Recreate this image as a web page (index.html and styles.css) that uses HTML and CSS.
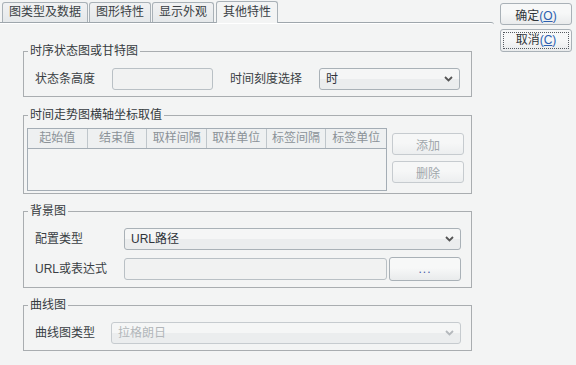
FILE: index.html
```html
<!DOCTYPE html>
<html lang="zh">
<head>
    <meta charset="UTF-8">
    <title>其他特性</title>
    <link rel="stylesheet" href="styles.css">
</head>
<body>
    <div class="window">
        <div class="main">
            <!-- Tabs -->
            <div class="tabs">
                <div class="tab">图类型及数据</div>
                <div class="tab">图形特性</div>
                <div class="tab">显示外观</div>
                <div class="tab selected">其他特性</div>
            </div>

            <div class="panel">
                <!-- Gantt -->
                <fieldset class="group group-gantt">
                    <legend>时序状态图或甘特图</legend>
                    <div class="row">
                        <span class="label label-bar">状态条高度</span>
                        <div class="input input-bar"></div>
                        <span class="label label-scale">时间刻度选择</span>
                        <div class="select select-scale">
                            <span>时</span>
                            <svg class="arrow" width="9" height="6" viewBox="0 0 9 6"><path d="M1 1 L4.5 4.5 L8 1" fill="none" stroke="#555" stroke-width="1.8"/></svg>
                        </div>
                    </div>
                </fieldset>

                <!-- Trend axis -->
                <fieldset class="group group-axis">
                    <legend>时间走势图横轴坐标取值</legend>
                    <div class="row row-top">
                        <div class="grid-table">
                            <div class="grid-head">
                                <div class="th">起始值</div>
                                <div class="th">结束值</div>
                                <div class="th">取样间隔</div>
                                <div class="th">取样单位</div>
                                <div class="th">标签间隔</div>
                                <div class="th">标签单位</div>
                            </div>
                        </div>
                        <div class="side-buttons">
                            <button class="btn disabled">添加</button>
                            <button class="btn disabled">删除</button>
                        </div>
                    </div>
                </fieldset>

                <!-- Background -->
                <fieldset class="group group-bg">
                    <legend>背景图</legend>
                    <div class="row">
                        <span class="label label-bg">配置类型</span>
                        <div class="select select-type">
                            <span>URL路径</span>
                            <svg class="arrow" width="9" height="6" viewBox="0 0 9 6"><path d="M1 1 L4.5 4.5 L8 1" fill="none" stroke="#555" stroke-width="1.8"/></svg>
                        </div>
                    </div>
                    <div class="row row-url">
                        <span class="label label-bg">URL或表达式</span>
                        <div class="input input-url"></div>
                        <button class="btn btn-browse">...</button>
                    </div>
                </fieldset>

                <!-- Curve -->
                <fieldset class="group group-curve">
                    <legend>曲线图</legend>
                    <div class="row">
                        <span class="label label-curve">曲线图类型</span>
                        <div class="select select-curve disabled">
                            <span>拉格朗日</span>
                            <svg class="arrow" width="9" height="6" viewBox="0 0 9 6"><path d="M1 1 L4.5 4.5 L8 1" fill="none" stroke="#b4b8bc" stroke-width="1.8"/></svg>
                        </div>
                    </div>
                </fieldset>
            </div>
        </div>

        <!-- Dialog buttons -->
        <div class="actions">
            <button class="btn btn-dialog">确定<span class="mn">(<u>O</u>)</span></button>
            <button class="btn btn-dialog focused"><span class="focus-ring">取消<span class="mn">(<u>C</u>)</span></span></button>
        </div>
    </div>
</body>
</html>
```

FILE: styles.css
```css
* {
    margin: 0;
    padding: 0;
    box-sizing: border-box;
}

body {
    font-family: 'Liberation Sans', 'Noto Sans CJK SC', sans-serif;
    font-size: 12px;
    line-height: 14px;
    color: #3a3f44;
    background-color: #f3f4f4;
    width: 576px;
    height: 365px;
    overflow: hidden;
}

.window {
    display: flex;
    height: 365px;
}

.main {
    width: 494px;
    display: flex;
    flex-direction: column;
}

/* Tabs */
.tabs {
    display: flex;
    align-items: flex-end;
    height: 22px;
    padding-left: 2px;
    gap: 1px;
}

.tab {
    height: 20px;
    padding: 0 6px;
    line-height: 18px;
    border: 1px solid #a9b1b7;
    border-bottom: none;
    border-radius: 3px 3px 0 0;
    background: linear-gradient(#f1f2f3, #e5e8ea);
    color: #3a3f44;
    font-size: 12px;
}

.tab.selected {
    height: 22px;
    line-height: 20px;
    margin-left: 1px;
    margin-bottom: -1px;
    background: #f3f4f4;
    position: relative;
    z-index: 1;
}

.panel {
    flex: 1;
    border-top: 1px solid #9ea6ac;
    border-top-right-radius: 3px;
    box-shadow: inset 0 1px #ffffff;
    padding-left: 23px;
}

/* Group boxes */
.group {
    width: 449px;
    border: 1px solid #a9adb0;
    padding: 10px 10px 6px 11px;
    margin-top: 10px;
}

.group legend {
    padding: 0 2px;
    margin-left: -7px;
    line-height: 14px;
    color: #363b40;
}

.group-gantt {
    margin-top: 21px;
    padding-bottom: 6px;
}

.group-axis {
    margin-top: 11px;
    padding: 6px 3px 2px 3px;
}

.group-axis legend {
    margin-left: 1px;
}

.row {
    display: flex;
    align-items: center;
}

.row-top {
    align-items: flex-start;
}

.row-url {
    margin-top: 7px;
}

.label {
    flex-shrink: 0;
    color: #3a3f44;
}

.label-bar { width: 77px; }
.label-scale { width: 89px; margin-left: 17px; }
.label-bg { width: 89px; }
.label-curve { width: 76px; }

/* Inputs */
.input {
    height: 22px;
    border: 1px solid #b9c0c5;
    border-radius: 3px;
    background-color: #f1f2f2;
}

.input-bar { width: 101px; }
.input-url { width: 263px; }

.select {
    height: 22px;
    display: flex;
    align-items: center;
    justify-content: space-between;
    padding: 0 6px 0 6px;
    border: 1px solid #a9b1b7;
    border-radius: 3px;
    background: linear-gradient(#f5f6f6 50%, #ebedee 50%);
    color: #2f3439;
}

.select-scale { width: 141px; }
.select-type { width: 337px; }
.select-curve { width: 350px; }

.select.disabled {
    border-color: #c6cbcf;
    color: #b2b6ba;
}

/* Table */
.grid-table {
    width: 360px;
    height: 63px;
    border: 1px solid #a4adb5;
}

.grid-head {
    display: grid;
    grid-template-columns: repeat(6, 1fr);
    height: 20px;
    border-bottom: 1px solid #a4adb5;
    background-color: #eef0f1;
}

.th {
    text-align: center;
    line-height: 19px;
    color: #8b9298;
    border-right: 1px solid #bfc6cb;
}

.th:last-child {
    border-right: none;
}

.side-buttons {
    display: flex;
    flex-direction: column;
    gap: 6px;
    margin-left: 5px;
    margin-top: 5px;
}

/* Buttons */
.btn {
    font-family: inherit;
    font-size: 12px;
    width: 72px;
    height: 22px;
    border: 1px solid #a9b1b7;
    border-radius: 3px;
    background: linear-gradient(#f7f8f8 45%, #e9ebec);
    color: #2f3439;
    cursor: pointer;
}

.btn.disabled {
    border-color: #c6cbcf;
    color: #a0a6ab;
    background: linear-gradient(#f6f7f7 45%, #eceeef);
}

.btn-browse {
    height: 24px;
    margin-left: 2px;
    color: #4a5aa8;
    letter-spacing: 1px;
}

.actions {
    display: flex;
    flex-direction: column;
    gap: 4px;
    margin-left: 6px;
    padding-top: 3px;
}

.btn-dialog {
    height: 22px;
}

.btn-dialog.focused {
    height: 23px;
    padding: 2px;
}

.focus-ring {
    display: block;
    height: 100%;
    line-height: 15px;
    border: 1px dotted #555a60;
}

.mn {
    color: #2c5fb0;
}
```
